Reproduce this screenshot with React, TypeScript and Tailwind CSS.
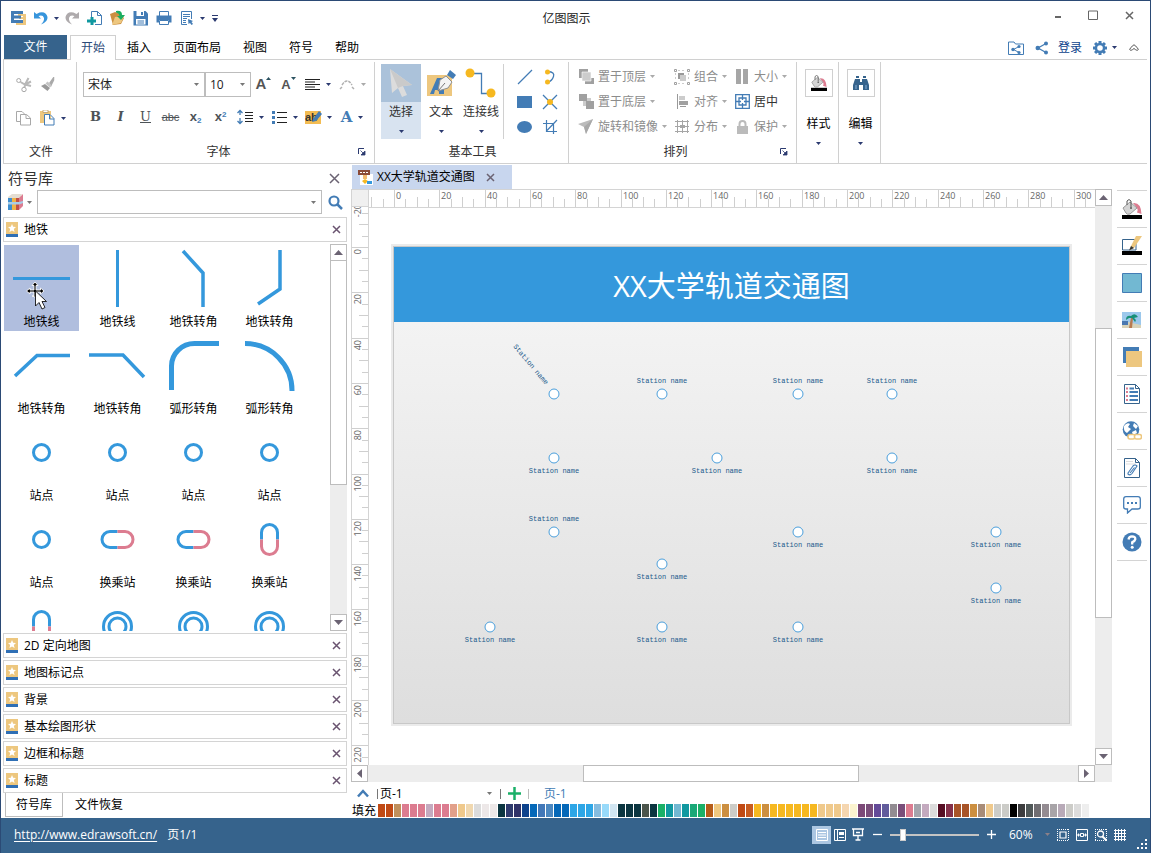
import type { ReactNode } from "react";

const BLUE = "#3498dc";
const STEEL = "#437cb5";
const PINK = "#dc7c90";
const SAND = "#edc77f";

/* ---------- small building blocks ---------- */

function Svg({ w, h, children }: { w: number; h: number; children: ReactNode }) {
  return (
    <svg width={w} height={h} viewBox={`0 0 ${w} ${h}`} fill="none" className="shrink-0" aria-hidden="true">
      {children}
    </svg>
  );
}

function Caret({ color = "#2b3a70" }: { color?: string }) {
  return (
    <Svg w={5} h={3}>
      <path d="M0 0H5L2.500 3Z" fill={color} />
    </Svg>
  );
}

function IconButton({ label, className = "", children }: { label: string; className?: string; children: ReactNode }) {
  return (
    <button type="button" aria-label={label} className={`flex shrink-0 items-center justify-center ${className}`}>
      {children}
    </button>
  );
}

function Cross({ size = 9, color = "#6b6373" }: { size?: number; color?: string }) {
  return (
    <Svg w={size} h={size}>
      <path d={`M1 1L${size - 1} ${size - 1}M${size - 1} 1L1 ${size - 1}`} stroke={color} strokeWidth="1.500" />
    </Svg>
  );
}

/* ---------- title bar ---------- */

function TitleBar() {
  return (
    <header className="grid h-[34px] grid-cols-[1fr_auto_1fr] items-center">
      <div className="flex items-center pl-2.5">
        <Svg w={16} h={16}>
          <path d="M7 4H15V15H5V12H12V9H8V7H12V6H7Z" fill={SAND} />
          <path d="M0 1H12V4H3V5.500H10V8.500H3V10H12V13H0Z" fill={STEEL} />
        </Svg>
        <IconButton label="撤销" className="ml-1.5 h-5 w-4">
          <Svg w={16} h={16}>
            <path d="M1 2V8.500H8L5.500 6Q10 4.500 11 8Q11.500 11 8 14.500Q15 12 14.500 7Q13 1 6.500 2.500L3.500 4Z" fill="#3795dc" />
          </Svg>
        </IconButton>
        <IconButton label="撤销列表" className="h-5 w-3.5"><Caret /></IconButton>
        <IconButton label="重做" className="ml-px h-5 w-4">
          <Svg w={16} h={16}>
            <path d="M15 2V8.500H8L10.500 6Q6 4.500 5 8Q4.500 11 8 14.500Q1 12 1.500 7Q3 1 9.500 2.500L12.500 4Z" fill="#aeaaac" />
          </Svg>
        </IconButton>
        <IconButton label="新建" className="ml-[7px] h-5 w-4">
          <Svg w={16} h={16}>
            <path d="M4.500 7V1.500H10.500L14.500 5.500V14.500H8M10.500 1.500V5.500H14.500" stroke={STEEL} />
            <path d="M3.500 7H6.500V9.500H9V12.500H6.500V15H3.500V12.500H0V9.500H3.500Z" fill="#1098a0" />
          </Svg>
        </IconButton>
        <IconButton label="打开" className="ml-[7px] h-5 w-4">
          <Svg w={16} h={16}>
            <path d="M0 4L5 2L8 3L14 8L11 14L3 15Z" fill="#cc8f40" />
            <path d="M2 15L5 7L14 6L11 13Z" fill={SAND} />
            <path d="M6 1Q12 0 12 5H15L11 10L7 6H9.500Q9 3 6 2.500Z" fill="#1aae60" />
          </Svg>
        </IconButton>
        <IconButton label="保存" className="ml-[7px] h-5 w-4">
          <Svg w={16} h={16}>
            <path d="M.5 1H12.500L15 3.500V15.500H.5Z" fill={STEEL} />
            <path d="M3.500 1H11V6H3.500ZM3 9H12.500V14.500H3Z" fill="#fff" />
            <path d="M8 2H10V5H8ZM4.500 10.500H11V11.500H4.500ZM4.500 12.500H11V13.500H4.500Z" fill={STEEL} />
          </Svg>
        </IconButton>
        <IconButton label="打印" className="ml-[7px] h-5 w-4">
          <Svg w={16} h={16}>
            <path d="M3.500 6V1.500H12.500V6M3.500 10.500H12.500V14.500H3.500Z" stroke={STEEL} />
            <path d="M.5 5.500H15.500V12.500H13V10H3V12.500H.5Z" fill={STEEL} />
          </Svg>
        </IconButton>
        <IconButton label="打印预览" className="ml-[7px] h-5 w-4">
          <Svg w={16} h={16}>
            <path d="M8 14.500H2.500V1.500H12.500V9" stroke={STEEL} />
            <path d="M4 4.500H11M4 6.500H11M4 8.500H8M4 10.500H7M4 12.500H7" stroke={STEEL} />
            <path d="M9 9L14 11L12.500 12L14 14L12.500 15L11 13L9.500 14Z" fill={STEEL} />
          </Svg>
        </IconButton>
        <IconButton label="预览列表" className="h-5 w-3.5"><Caret /></IconButton>
        <IconButton label="自定义快速访问工具栏" className="h-5 w-3">
          <Svg w={6} h={7}><path d="M0 0H6V1H0ZM0 3H6L3 7Z" fill="#2b3a70" /></Svg>
        </IconButton>
      </div>
      <h1 className="mr-[18px] pt-0.5 text-xs text-[#222]">亿图图示</h1>
      <div className="flex items-center justify-end pr-[3px] pb-1.5">
        <IconButton label="最小化" className="h-6 w-9"><Svg w={11} h={11}><path d="M3 6H9V8H3Z" fill="#666" /></Svg></IconButton>
        <IconButton label="最大化" className="h-6 w-9"><Svg w={10} h={10}><path d="M.5 1H9.500V9.500H.5Z" stroke="#666" /></Svg></IconButton>
        <IconButton label="关闭" className="h-6 w-9"><Cross color="#666" /></IconButton>
      </div>
    </header>
  );
}

/* ---------- ribbon ---------- */

const tabs = ["插入", "页面布局", "视图", "符号", "帮助"];

function TabRow() {
  return (
    <nav className="relative z-10 -mb-px flex h-[25px] pl-[3px] text-xs text-black" aria-label="功能区选项卡">
      <button type="button" className="mb-px w-[63px] bg-[#36638c] text-white">文件</button>
      <button type="button" className="ml-[3px] border border-b-0 border-[#d0d0d0] bg-white px-2.5 text-[#2c4a78]">开始</button>
      {tabs.map((t) => (
        <button type="button" key={t} className="px-[11px]">{t}</button>
      ))}
      <div className="ml-auto flex items-center pr-2">
        <IconButton label="共享文件夹" className="h-5 w-4">
          <Svg w={16} h={14}>
            <path d="M.5 13.500V1H6L7.500 3H15.500V13.500Z" stroke={STEEL} />
            <path d="M11 5.500L5.500 8.500L11 11.500" stroke={STEEL} />
            <circle cx="11" cy="5.500" r="1.600" fill={STEEL} /><circle cx="5" cy="8.500" r="1.700" fill={STEEL} /><circle cx="11" cy="11.500" r="1.600" fill={STEEL} />
          </Svg>
        </IconButton>
        <IconButton label="共享" className="ml-2.5 h-5 w-4">
          <Svg w={14} h={14}>
            <path d="M11 2.500L3 7L11 11.500" stroke={STEEL} strokeWidth="1.300" />
            <circle cx="11" cy="2.500" r="2" fill={STEEL} /><circle cx="2.800" cy="7" r="2.300" fill={STEEL} /><circle cx="11" cy="11.500" r="2" fill={STEEL} />
          </Svg>
        </IconButton>
        <button type="button" className="ml-2 text-[#0d428c]">登录</button>
        <IconButton label="设置" className="ml-2.5 h-5 w-4">
          <Svg w={14} h={14}>
            <g fill={STEEL}>
              <path d="M5.500 0H8.500V14H5.500Z" /><path d="M0 5.500H14V8.500H0Z" />
              <path d="M1 3.100L3.100 1L13 10.900L10.900 13Z" /><path d="M10.900 1L13 3.100L3.100 13L1 10.900Z" />
              <circle cx="7" cy="7" r="5.300" />
            </g>
            <circle cx="7" cy="7" r="2.800" fill="#fff" />
          </Svg>
        </IconButton>
        <IconButton label="设置列表" className="h-5 w-3"><Caret /></IconButton>
        <IconButton label="折叠功能区" className="ml-1.5 h-5 w-4">
          <Svg w={10} h={8}><path d="M.7 5.500Q.7 4 5 .7Q9.300 4 9.300 5.500Q8.500 7.500 5 4.500Q1.500 7.500.7 5.500Z" stroke="#555" /></Svg>
        </IconButton>
      </div>
    </nav>
  );
}

function Group({ label, launcher, className = "", children }: { label: string; launcher?: boolean; className?: string; children: ReactNode }) {
  return (
    <section aria-label={label} className="mt-0.5 flex shrink-0 flex-col border-r border-[#d0d0d0]">
      <div className={`h-20 pt-0.5 ${className}`}>{children}</div>
      <div className={`relative flex h-5 items-center justify-center text-xs text-[#333] ${launcher ? "pr-3.5" : "pl-0.5"}`}>
        {label}
        {launcher && (
          <button type="button" aria-label={`${label}对话框`} className="absolute right-2 top-1.5">
            <Svg w={8} h={8}>
              <path d="M.5 6V.5H6" stroke="#2b3a70" />
              <path d="M2.500 2.500L5 5M7 3V7H3Z" fill="#2b3a70" stroke="#2b3a70" strokeWidth=".8" />
            </Svg>
          </button>
        )}
      </div>
    </section>
  );
}

function SplitButton({ label, muted, children }: { label: string; muted?: boolean; children: ReactNode }) {
  return (
    <button type="button" aria-label={label} className="flex h-6 w-[34px] items-center gap-1.5 pl-1">
      {children}
      <Caret color={muted ? "#aaa" : "#2b3a70"} />
    </button>
  );
}

function Combo({ label, options, className }: { label: string; options: string[]; className: string }) {
  return (
    <div className={`relative flex ${className}`}>
      <select aria-label={label} className="h-[25px] w-full appearance-none border border-[#bdbdbd] bg-white pl-1 text-xs text-[#222]">
        {options.map((o) => <option key={o}>{o}</option>)}
      </select>
      <span className="pointer-events-none absolute right-1.5 top-[11px]"><Caret color="#777" /></span>
    </div>
  );
}

function FileGroup() {
  return (
    <Group label="文件" className="grid w-[72px] grid-cols-[25px_32px] content-start pl-[7px]">
      <IconButton label="剪切" className="h-[42px]">
        <Svg w={16} h={16}>
          <circle cx="2.700" cy="3.500" r="2" stroke="#a8a8a8" /><circle cx="8" cy="12.500" r="2.200" stroke="#a8a8a8" />
          <path d="M4.500 5L9 7.500L15 4.500M8.500 10.500L9 7.500L12.500 1M9 7.500L15 9" stroke="#b8b8b8" strokeWidth="2" />
        </Svg>
      </IconButton>
      <IconButton label="格式刷" className="h-[42px] w-6">
        <Svg w={16} h={16}>
          <path d="M10 6L13.500 1V3L11 8Z" fill="#999" stroke="#aaa" strokeWidth="1.500" />
          <path d="M7.500 4.500L12 8.500L10 10.500L5.500 6.500Z" fill="#c4c4c4" /><path d="M5 7L10 11L7.500 14L1 9Z" fill="#999" />
        </Svg>
      </IconButton>
      <IconButton label="复制" className="h-6">
        <Svg w={16} h={16}>
          <path d="M4 11.500H.5V1.500H6L9 4.500" stroke="#a8a8a8" />
          <path d="M4.500 4.500H10.500L14.500 8V15H4.500ZM10 4.500V8.500H14.500" fill="#fff" stroke="#a8a8a8" />
        </Svg>
      </IconButton>
      <SplitButton label="粘贴">
        <Svg w={15} h={16}>
          <path d="M0 1H11V13H0Z" fill={SAND} /><path d="M3 0H8V2.500H3Z" fill="#fff" stroke="#b8965a" strokeWidth=".7" />
          <path d="M4.500 4.500H10L14 8.500V15H4.500ZM9.500 4.500V9H14" fill="#fff" stroke={STEEL} />
        </Svg>
      </SplitButton>
    </Group>
  );
}

function FontGroup() {
  return (
    <Group label="字体" launcher className="flex w-[297px] flex-col gap-2 pl-1.5">
      <div className="mt-2 flex h-[25px] items-center">
        <Combo label="字体" options={["宋体", "黑体"]} className="w-[122px]" />
        <Combo label="字号" options={["10", "12"]} className="w-[46px]" />
        <button type="button" aria-label="增大字号" className="flex h-6 w-[25px] items-center justify-center font-[Liberation_Sans] text-[15px] font-bold text-[#555]">
          A<span className="mb-3"><Svg w={5} h={3}><path d="M0 3H5L2.500 0Z" fill="#2c5260" /></Svg></span>
        </button>
        <button type="button" aria-label="减小字号" className="flex h-6 w-[25px] items-center justify-center font-[Liberation_Sans] text-[13px] font-bold text-[#555]">
          A<span className="mb-3"><Caret color="#2c5260" /></span>
        </button>
        <SplitButton label="对齐方式">
          <Svg w={15} h={12}><path d="M0 .5H15M0 3H10M0 5.500H15M0 8H10M0 10.500H15" stroke="#222" strokeWidth="1.100" /></Svg>
        </SplitButton>
        <SplitButton label="弧形文字" muted>
          <Svg w={16} h={12}><path d="M1 10L3 8M3 6Q8-2 13 6M13 8L15 10" stroke="#b0b0b0" strokeWidth="1.500" strokeDasharray="3 1" /></Svg>
        </SplitButton>
      </div>
      <div className="flex h-6 items-center font-[DejaVu_Serif] text-[13px] font-bold text-[#4d5357]">
        <button type="button" className="w-[25px]" aria-label="粗体">B</button>
        <button type="button" className="w-[25px] italic" aria-label="斜体">I</button>
        <button type="button" className="w-[25px] font-normal underline" aria-label="下划线">U</button>
        <button type="button" className="w-[25px] font-[Liberation_Sans] text-[11px] font-normal line-through" aria-label="删除线">abc</button>
        <button type="button" className="w-[25px] font-[Liberation_Sans]" aria-label="下标">x<sub className="text-[8px] text-[#437cb5]">2</sub></button>
        <button type="button" className="w-[25px] font-[Liberation_Sans]" aria-label="上标">x<sup className="text-[8px] text-[#437cb5]">2</sup></button>
        <SplitButton label="行距">
          <Svg w={16} h={16}>
            <path d="M3 2V6M3 9V14M.5 4L3 1.500L5.500 4M.5 12L3 14.500L5.500 12" stroke={STEEL} strokeWidth="1.300" />
            <path d="M8 3.500H16M8 6.500H16M8 9.500H16M8 12.500H16" stroke="#222" />
          </Svg>
        </SplitButton>
        <SplitButton label="项目符号">
          <Svg w={16} h={14}>
            <path d="M1 1H4V4H1ZM1 6H4V9H1ZM1 11H4V14H1Z" fill={STEEL} /><path d="M6 2.500H16M6 7.500H16M6 12.500H16" stroke="#222" strokeWidth="1.200" />
          </Svg>
        </SplitButton>
        <SplitButton label="突出显示">
          <span className="relative flex h-[13px] w-4 items-center bg-[#f3bc52] font-[Liberation_Sans] text-[11px] leading-none text-[#333]">
            ab
            <span className="absolute left-1.5 top-0"><Svg w={11} h={11}><path d="M2 8L8 0L11 3L5 10L1 11Z" fill={STEEL} /></Svg></span>
          </span>
        </SplitButton>
        <button type="button" aria-label="字体颜色" className="flex h-6 w-[34px] items-center justify-center gap-1.5 text-[15px] text-[#437cb5]">
          A<Caret />
        </button>
      </div>
    </Group>
  );
}

function BigTool({ label, active, children }: { label: string; active?: boolean; children: ReactNode }) {
  return (
    <button type="button" aria-pressed={!!active} className={`flex h-[75px] w-10 flex-col items-center text-xs whitespace-nowrap text-[#333] ${active ? "bg-[#d8e3f0]" : ""}`}>
      <span className={`flex h-[38px] w-full items-center justify-center ${active ? "bg-[#abc2da]" : ""}`}>{children}</span>
      <span className="mt-0.5 leading-4">{label}</span>
      <span className="mt-2.5"><Caret /></span>
    </button>
  );
}

function ToolsGroup() {
  return (
    <Group label="基本工具" className="flex w-[193px] pl-1.5">
      <BigTool label="选择" active>
        <Svg w={24} h={30}><path d="M1 1L3 25L9 20L13 29L18 27L14 18L23 17Z" fill="#dcdcdc" /><path d="M1 1L9 20L14 18L23 17Z" fill="#cacaca" /></Svg>
      </BigTool>
      <BigTool label="文本">
        <Svg w={30} h={28}>
          <path d="M1 6H26V27H1Z" fill={SAND} />
          <path d="M4 25L11 9H18V25H13V21H9L8 25Z" fill={STEEL} />
          <path d="M12 22L14 11L20 7L26 13L22 19Z" fill="#f4f4f4" stroke="#909090" /><path d="M12 22L19 14" stroke="#777" />
          <path d="M21 6L24 1L30 6L27 10Z" fill={STEEL} />
        </Svg>
      </BigTool>
      <BigTool label="连接线">
        <Svg w={32} h={30}>
          <path d="M5 5.500H16.500V25.500H26" stroke={STEEL} strokeWidth="1.300" />
          <circle cx="5" cy="5" r="4.500" fill="#f6b820" /><circle cx="26" cy="25" r="4.500" fill="#f6b820" />
        </Svg>
      </BigTool>
      <div className="ml-0.5 h-[75px] border-l border-[#d0d0d0]" />
      <div className="ml-2 grid grid-cols-[25px_25px] auto-rows-[25px]">
        <IconButton label="直线"><Svg w={16} h={16}><path d="M1 15L15 1" stroke={STEEL} strokeWidth="1.300" /></Svg></IconButton>
        <IconButton label="弧线"><Svg w={12} h={16}><path d="M4 2.500Q11 3 9.500 7.500Q8 12 4 13" stroke={STEEL} strokeWidth="1.300" /><circle cx="3.500" cy="3" r="2.500" fill="#f6b820" /><circle cx="3.500" cy="13" r="2.500" fill="#f6b820" /></Svg></IconButton>
        <IconButton label="矩形"><Svg w={15} h={12}><path d="M0 0H15V12H0Z" fill={STEEL} /></Svg></IconButton>
        <IconButton label="连接点"><Svg w={16} h={16}><path d="M1 1L15 15M15 1L1 15" stroke={STEEL} strokeWidth="1.300" /><circle cx="8" cy="8" r="3" fill="#f6b820" /></Svg></IconButton>
        <IconButton label="椭圆"><Svg w={15} h={12}><ellipse cx="7.500" cy="6" rx="7.500" ry="6" fill={STEEL} /></Svg></IconButton>
        <IconButton label="裁剪"><Svg w={16} h={16}><path d="M4.500 1V12.500H15M1 4.500H11.500V15M15 1L5 11.500" stroke={STEEL} strokeWidth="1.200" /></Svg></IconButton>
      </div>
    </Group>
  );
}

function ArrangeButton({ label, enabled, children }: { label: string; enabled?: boolean; children: ReactNode }) {
  return (
    <button type="button" className={`flex h-[25px] items-center text-xs whitespace-nowrap ${enabled ? "text-[#333]" : "text-[#8c8c8c]"}`}>
      <span className="mr-0.5 flex w-5 justify-center">{children}</span>
      {label}
      {!enabled && <span className="ml-1"><Caret color="#aaa" /></span>}
    </button>
  );
}

function ArrangeGroup() {
  return (
    <Group label="排列" launcher className="grid w-[227px] grid-cols-[96px_60px_60px] auto-rows-[25px] pl-[7px]">
      <ArrangeButton label="置于顶层">
        <Svg w={15} h={15}><path d="M0 0H9V9H0ZM6 9H15V15H6Z" fill="#a0a0a0" /><path d="M3 3H12V12H3Z" fill="#ccc" stroke="#fff" strokeWidth=".6" /></Svg>
      </ArrangeButton>
      <ArrangeButton label="组合">
        <Svg w={16} h={16}>
          <path d="M4 4H10V10H4Z" fill="#999" /><path d="M6 6H12V12H6Z" fill="#ccc" />
          <path d="M.5.5H2.500V2.500H.5ZM13.500.5H15.500V2.500H13.500ZM.5 13.500H2.500V15.500H.5ZM13.500 13.500H15.500V15.500H13.500Z" stroke="#a0a0a0" />
          <path d="M4 1.500H12M4 14.500H12M1.500 4V12M14.500 4V12" stroke="#ccc" strokeDasharray="2 2" />
        </Svg>
      </ArrangeButton>
      <ArrangeButton label="大小"><Svg w={14} h={15}><path d="M1 0H6V15H1ZM8 0H13V15H8Z" fill="#a6a6a6" /></Svg></ArrangeButton>
      <ArrangeButton label="置于底层">
        <Svg w={15} h={15}><path d="M4 4H12V12H4Z" fill="#ccc" /><path d="M0 0H8V7H0ZM7 7H15V15H7Z" fill="#a0a0a0" /></Svg>
      </ArrangeButton>
      <ArrangeButton label="对齐">
        <Svg w={13} h={15}><path d="M1.500 0V15M4 12.500H10" stroke="#999" /><path d="M3 2H9V6H3Z" fill="#ccc" /><path d="M3 7H12V11H3Z" fill="#a0a0a0" /></Svg>
      </ArrangeButton>
      <ArrangeButton label="居中" enabled>
        <Svg w={15} h={15}><path d="M.7.7H14.300V14.300H.7ZM4 4H11V11H4ZM7.500 1V6M7.500 9V14M1 7.500H6M9 7.500H14" stroke={STEEL} strokeWidth="1.300" /></Svg>
      </ArrangeButton>
      <ArrangeButton label="旋转和镜像">
        <Svg w={16} h={15}><path d="M0 5L15 0L8 15L6 8Z" fill="#bbb" /><path d="M15 0L8 15L6 8Z" fill="#a8a8a8" /></Svg>
      </ArrangeButton>
      <ArrangeButton label="分布">
        <Svg w={14} h={15}><path d="M2.500 1V14M7.500 1V14M12.500 1V14M0 2.500H14M0 7.500H14M0 12.500H14" stroke="#a6a6a6" /><path d="M5 6H10V9H5Z" fill="#a6a6a6" /></Svg>
      </ArrangeButton>
      <ArrangeButton label="保护">
        <Svg w={13} h={14}><path d="M1 6H12V14H1Z" fill="#bbb" /><path d="M3.500 7V4Q3.500 1 6.500 1Q9.500 1 9.500 4V7" stroke="#bbb" strokeWidth="2" /></Svg>
      </ArrangeButton>
    </Group>
  );
}

function PaintBucket({ large }: { large?: boolean }) {
  const s = large ? 20 : 16;
  return (
    <svg width={s} height={s} viewBox="0 0 20 20" fill="none" aria-hidden="true">
      <path d="M0 16H20V20H0Z" fill="#000" />
      <path d="M11 4Q19 3 19.500 15L15 13.500Q16.500 11 15 9Z" fill={PINK} />
      <path d="M1 9L8 3L15 9L8 15Q5 16 4 14Z" fill="#d4d4d4" stroke="#999" />
      <path d="M5 6V2Q7-1 9 2V8" stroke="#555" /><circle cx="9" cy="9" r="1" fill="#555" />
    </svg>
  );
}

function SingleTool({ label, children }: { label: string; children: ReactNode }) {
  return (
    <button type="button" className="mt-0.5 flex w-[42px] shrink-0 flex-col items-center border-r border-[#d0d0d0] pt-[7px] pl-0.5 text-xs text-black">
      <span className="flex size-7 items-center justify-center border border-[#d0d0d0]">{children}</span>
      <span className="mt-[19px] leading-4">{label}</span>
      <span className="mt-2.5"><Caret /></span>
    </button>
  );
}

function Ribbon() {
  return (
    <div className="mr-[3px] ml-0.5 flex h-[105px] border border-r-0 border-[#d0d0d0]">
      <FileGroup />
      <FontGroup />
      <ToolsGroup />
      <ArrangeGroup />
      <SingleTool label="样式"><PaintBucket /></SingleTool>
      <SingleTool label="编辑">
        <Svg w={16} h={16}>
          <path d="M3 1H6V3H3ZM10 1H13V3H10ZM2 4H7V7H9V4H14L16 10V15H10V10H6V15H0V10Z" fill="#36638c" />
          <path d="M3 10V14M13 10V14" stroke="#86b0d8" />
        </Svg>
      </SingleTool>
    </div>
  );
}

/* ---------- symbol library ---------- */

const Pill = ({ vertical }: { vertical?: boolean }) =>
  vertical ? (
    <>
      <path d="M29.500 33.500V26.500A8 8 0 0 1 45.500 26.500V33.500" stroke={BLUE} strokeWidth="3" />
      <path d="M29.500 33.500V40.500A8 8 0 0 0 45.500 40.500V33.500" stroke={PINK} strokeWidth="3" />
    </>
  ) : (
    <>
      <path d="M37.500 25.500H30A8 8 0 0 0 30 41.500H37.500" stroke={BLUE} strokeWidth="3" />
      <path d="M37.500 25.500H45A8 8 0 0 1 45 41.500H37.500" stroke={PINK} strokeWidth="3" />
    </>
  );

const Stop = () => <circle cx="37.500" cy="33.500" r="8" stroke={BLUE} strokeWidth="3" />;
const Rings = () => (
  <g stroke={BLUE} strokeWidth="3">
    <circle cx="37.500" cy="33.500" r="14" /><circle cx="37.500" cy="33.500" r="8.500" />
  </g>
);
const Line = ({ d, w = 3.500 }: { d: string; w?: number }) => <path d={d} stroke={BLUE} strokeWidth={w} />;

const symbols: { name?: string; art: ReactNode }[] = [
  { name: "地铁线", art: <Line d="M9 33.500H66" w={3} /> },
  { name: "地铁线", art: <Line d="M37.500 5V62" w={3} /> },
  { name: "地铁转角", art: <Line d="M27 6L47 28V62" /> },
  { name: "地铁转角", art: <Line d="M48 5V44L26 59" /> },
  { name: "地铁转角", art: <Line d="M11 44L33 23.500H66" /> },
  { name: "地铁转角", art: <Line d="M9 23H43L64 45" /> },
  { name: "弧形转角", art: <Line d="M15.500 58V34A23 22.500 0 0 1 38.500 11.500H63" w={5} /> },
  { name: "弧形转角", art: <Line d="M13 11.500A47 47 0 0 1 60 59" w={5} /> },
  { name: "站点", art: <Stop /> },
  { name: "站点", art: <Stop /> },
  { name: "站点", art: <Stop /> },
  { name: "站点", art: <Stop /> },
  { name: "站点", art: <Stop /> },
  { name: "换乘站", art: <Pill /> },
  { name: "换乘站", art: <Pill /> },
  { name: "换乘站", art: <Pill vertical /> },
  { art: <Pill vertical /> },
  { art: <Rings /> },
  { art: <Rings /> },
  { art: <Rings /> },
];

const closedLibraries = ["2D 定向地图", "地图标记点", "背景", "基本绘图形状", "边框和标题", "标题"];

function LibraryHeader({ name }: { name: string }) {
  return (
    <div className="flex h-[25px] shrink-0 items-center border border-[#d4d4d4] pr-[5px] pl-0.5 text-xs text-black">
      <Svg w={12} h={15}>
        <path d="M0 0H12V12H0Z" fill={SAND} /><path d="M0 12H12V15H0Z" fill="#2f6fb5" />
        <path d="M6 2L7.200 4.800L10 5L7.800 7L8.600 10L6 8.400L3.400 10L4.200 7L2 5L4.800 4.800Z" fill="#fff" />
      </Svg>
      <span className="ml-1.5 flex-1">{name}</span>
      <IconButton label={`关闭${name}`} className="size-2.5"><Cross size={9} color="#6a5470" /></IconButton>
    </div>
  );
}

function ScrollArrow({ dir }: { dir: "up" | "down" | "left" | "right" }) {
  const shapes = { up: "M0 7H9L4.500 2Z", down: "M0 2H9L4.500 7Z", left: "M7 0V9L2 4.500Z", right: "M2 0V9L7 4.500Z" };
  const names = { up: "向上滚动", down: "向下滚动", left: "向左滚动", right: "向右滚动" };
  return (
    <IconButton label={names[dir]} className="size-[17px] border border-[#bdbdbd] bg-white">
      <Svg w={9} h={9}><path d={shapes[dir]} fill="#6b6373" /></Svg>
    </IconButton>
  );
}

function SymbolPanel() {
  return (
    <aside className="flex w-[350px] shrink-0 flex-col pr-1 pl-0.5">
      <div className="flex h-[26px] shrink-0 items-center justify-between pt-0.5 pr-[7px] pl-[5px]">
        <h2 className="text-[15px] text-[#333]">符号库</h2>
        <IconButton label="关闭符号库" className="size-3"><Cross size={11} /></IconButton>
      </div>
      <div className="flex h-6 shrink-0 items-center pr-0.5 pl-[5px]">
        <IconButton label="符号库列表" className="h-6 w-6 gap-1">
          <Svg w={15} h={16}>
            <path d="M0 3L4 0H14L12 4H0Z" fill="#e4ddd2" /><path d="M0 4H4V16H0Z" fill="#3f8fd0" /><path d="M4 4H8V16H4Z" fill="#f0b44a" />
            <path d="M8 4H11V16H8Z" fill="#c05048" /><path d="M11 4L15 0V12L11 16Z" fill={PINK} /><path d="M0 8H11L15 7V9L11 10.500H0Z" fill="#a8cde8" />
          </Svg>
          <Caret color="#777" />
        </IconButton>
        <div className="ml-[5px] flex h-6 flex-1 items-center border border-[#bdbdbd]">
          <input type="text" aria-label="搜索符号" className="h-full min-w-0 flex-1 px-1 text-xs outline-none" />
          <IconButton label="搜索记录" className="h-full w-4"><Caret color="#777" /></IconButton>
        </div>
        <IconButton label="搜索" className="ml-[3px] size-5">
          <Svg w={15} h={15}><circle cx="6" cy="6" r="4.500" stroke={STEEL} strokeWidth="2.200" /><path d="M9.500 9.500L14 14" stroke={STEEL} strokeWidth="2.500" /></Svg>
        </IconButton>
      </div>
      <div className="mt-[3px] mb-0.5 flex flex-col"><LibraryHeader name="地铁" /></div>
      <div className="flex min-h-0 flex-1">
        <div className="grid flex-1 grid-cols-[76px_76px_76px_76px] auto-rows-[87px] content-start overflow-hidden pt-px pl-px">
          {symbols.map((s, i) => (
            <button type="button" key={i} className={`mr-px mb-px flex flex-col items-center text-xs text-black ${i === 0 ? "bg-[#b0bede]" : ""}`}>
              <Svg w={75} h={68}>
                {s.art}
                {i === 0 && (
                  <g stroke="#fff" strokeWidth=".9" fill="#000">
                    <path d="M31 37L34 40.500H32V45H36.500V43L40 46L36.500 49V47H32V51L34 52H31L28 51L30 51V47H26V49L22.500 46L26 43V45H30V40.500H28Z" />
                    <path d="M31.500 46V61L35 57.500L38 64L41 62.500L38 56.500H42.500Z" fill="#fff" stroke="#111" />
                  </g>
                )}
              </Svg>
              {s.name && <span className="leading-[18px]">{s.name}</span>}
            </button>
          ))}
        </div>
        <div className="flex w-[17px] flex-col bg-[#ededed]">
          <ScrollArrow dir="up" />
          <div className="-mt-px h-[225px] border border-[#bdbdbd] bg-white" />
          <div className="flex-1" />
          <ScrollArrow dir="down" />
        </div>
      </div>
      <div className="mt-0.5 flex flex-col gap-0.5">
        {closedLibraries.map((n) => <LibraryHeader key={n} name={n} />)}
      </div>
      <div className="flex h-[25px] shrink-0 pb-px pl-0.5 text-xs text-black">
        <button type="button" className="border border-t-0 border-[#bdbdbd] px-2.5">符号库</button>
        <button type="button" className="px-3">文件恢复</button>
      </div>
    </aside>
  );
}

/* ---------- drawing area ---------- */

const UNIT = 2.265;

function HorizontalRuler() {
  const ticks = Array.from({ length: 64 }, (_, i) => (i - 2) * 5);
  return (
    <svg width="100%" height="18" className="block min-w-0 flex-1 border-b border-[#d4d4d4]" aria-hidden="true">
      {ticks.map((v) => {
        const x = Math.round(25 + v * UNIT) + 0.5;
        const top = v % 20 === 0 ? 0 : v % 10 === 0 ? 7 : 9;
        return (
          <g key={v}>
            <path d={`M${x} ${top}V18`} stroke="#cfcfcf" />
            {v % 20 === 0 && <text x={x + 1.500} y="9" fontSize="9" fill="#666">{v}</text>}
          </g>
        );
      })}
    </svg>
  );
}

function VerticalRuler() {
  const ticks = Array.from({ length: 52 }, (_, i) => (i - 4) * 5);
  return (
    <svg width="18" height="100%" className="block h-full shrink-0 border-x border-[#d4d4d4]" aria-hidden="true">
      {ticks.map((v) => {
        const y = Math.round(40 + v * UNIT) + 0.5;
        const left = v % 20 === 0 ? 0 : v % 10 === 0 ? 7 : 10;
        return (
          <g key={v}>
            <path d={`M${left} ${y}H18`} stroke="#cfcfcf" />
            {v % 20 === 0 && <text transform={`translate(9 ${y + 1.500}) rotate(-90)`} textAnchor="end" fontSize="9" fill="#666">{v}</text>}
          </g>
        );
      })}
    </svg>
  );
}

type Station = { x: number; y: number; label: "above" | "below" | "slanted" };

const stations: Station[] = [
  { x: 160, y: 147, label: "slanted" },
  { x: 268, y: 147, label: "above" },
  { x: 404, y: 147, label: "above" },
  { x: 498, y: 147, label: "above" },
  { x: 160, y: 211, label: "below" },
  { x: 323, y: 211, label: "below" },
  { x: 498, y: 211, label: "below" },
  { x: 160, y: 285, label: "above" },
  { x: 404, y: 285, label: "below" },
  { x: 602, y: 285, label: "below" },
  { x: 268, y: 317, label: "below" },
  { x: 602, y: 341, label: "below" },
  { x: 96, y: 380, label: "below" },
  { x: 268, y: 380, label: "below" },
  { x: 404, y: 380, label: "below" },
];

const labelPlace = {
  above: "-top-3.5 left-1/2 -translate-x-1/2",
  below: "top-3 left-1/2 -translate-x-1/2",
  slanted: "-left-11 -top-[30px] rotate-[50deg]",
};

function DrawingPage() {
  return (
    <div className="relative h-[476px] w-[675px] shrink-0 bg-linear-to-b from-[#f7f7f7] to-[#dedede] shadow-[0_0_0_1px_#c8c8c8,0_0_0_3px_#ebebeb]">
      <h2 className="flex h-[75px] items-center justify-center bg-[#3498dc] pt-0.5 text-[29px] text-white">XX大学轨道交通图</h2>
      {stations.map((s, i) => (
        <div key={i} className="absolute size-[11px] -translate-1/2 rounded-full border border-[#4a9fdc] bg-white" style={{ left: s.x, top: s.y }}>
          <span className={`absolute font-[Liberation_Mono] text-[7px] leading-[10px] whitespace-nowrap text-[#1d5b8c] ${labelPlace[s.label]}`}>Station name</span>
        </div>
      ))}
    </div>
  );
}

const palette =
  "c04a15 c04a15 c0905c dc7c90 dc7c90 dc7c90 c4aabf dc7c90 dc7c90 e2a08a efc98c f0d8b0 dcdcdc ede8e8 ede8e8 0b3540 2f3b6e 2f3268 0d428c 0568b8 4278b8 4c88c0 0568b8 0568b8 2ea6e6 2ea6e6 2ea6e6 84bce0 98dafa d2e6f2 0b3540 0b3540 0b3540 4c554c 0b3540 1ab068 1098a0 72b8d2 1098a0 1aa878 1ab068 b55c18 efc880 cc8f40 ccccc8 c04a15 c85c20 f6b820 cc8f40 f6b820 f6b820 f6b820 f6b820 f6b820 f6b820 efc98c efc98c efc98c f5d6b0 fbf4cf 7c4a78 7a4e7a 644a98 625c9c 928c92 7a4e7a dc7c90 a4a4ac c4aabf dcdcdc 560e24 84304a a85428 a85428 cc8f40 a88c78 efc98c ccccc8 ccccc8 000000 3c3c3e 505858 706e72 948c92 a8a4a8 b8aab8 ccccc8 dcdcdc eeeeee".split(" ");

function Workspace() {
  return (
    <main className="flex min-w-0 flex-1 flex-col">
      <div className="flex h-[25px] shrink-0 pt-px">
        <div className="ml-px flex w-40 items-center bg-[#c8d6ee] pl-1.5 text-xs whitespace-nowrap text-black">
          <Svg w={15} h={15}>
            <path d="M2 4H15V15H2Z" fill="#fff" /><path d="M0 0H12V5H0Z" fill="#8a4a38" /><path d="M2 2.500H10" stroke="#fff" strokeDasharray="2 1" />
            <path d="M5 5H9V9H5Z" fill="#f0b870" /><path d="M4 11L7 9L10 11L7 14Z" fill="#f6b820" /><path d="M9 11H14V14H9Z" fill={BLUE} />
          </Svg>
          <span className="ml-1">XX大学轨道交通图</span>
          <IconButton label="关闭文档" className="ml-2.5 size-3"><Cross /></IconButton>
        </div>
      </div>
      <div className="flex min-h-0 flex-1">
        <div className="flex min-w-0 flex-1 flex-col">
          <div className="flex h-[18px] shrink-0 border-t border-[#d4d4d4]">
            <div className="w-[18px] shrink-0 border border-t-0 border-[#d4d4d4] bg-[#f0f0f0]" />
            <HorizontalRuler />
          </div>
          <div className="flex min-h-0 flex-1">
            <VerticalRuler />
            <div className="min-w-0 flex-1 overflow-hidden pt-10 pl-[25px]"><DrawingPage /></div>
          </div>
        </div>
        <div className="flex w-[17px] flex-col bg-[#ededed]">
          <ScrollArrow dir="up" />
          <div className="basis-[122px]" />
          <div className="min-h-0 basis-[290px] border border-[#bdbdbd] bg-white" />
          <div className="flex-1" />
          <ScrollArrow dir="down" />
        </div>
      </div>
      <div className="flex h-[17px] shrink-0 bg-[#ededed] pr-[17px]">
        <ScrollArrow dir="left" />
        <div className="basis-[215px]" />
        <div className="basis-[276px] border border-[#bdbdbd] bg-white" />
        <div className="flex-1" />
        <ScrollArrow dir="right" />
      </div>
      <div className="flex h-[21px] shrink-0 items-center pt-0.5 text-xs text-black">
        <IconButton label="展开页面列表" className="ml-1.5 h-[18px] w-3">
          <Svg w={12} h={9}><path d="M1 7.500L6 2L11 7.500" stroke={STEEL} strokeWidth="2.500" /></Svg>
        </IconButton>
        <div className="ml-2 h-2.5 border-l border-[#777]" />
        <div className="relative flex w-[122px] items-center">
          <select aria-label="页面" className="w-full appearance-none bg-white pl-0.5 leading-[18px] outline-none"><option>页-1</option></select>
          <span className="pointer-events-none absolute right-2"><Caret color="#777" /></span>
        </div>
        <div className="h-2.5 border-l border-[#777]" />
        <IconButton label="添加页面" className="ml-1.5 size-3.5">
          <Svg w={13} h={13}><path d="M6.500 0V13M0 6.500H13" stroke="#1ab068" strokeWidth="2.500" /></Svg>
        </IconButton>
        <div className="ml-[7px] h-2.5 border-l border-[#bbb]" />
        <button type="button" className="ml-[15px] text-[#437cb5]">页-1</button>
      </div>
      <div className="flex h-[15px] shrink-0 items-center overflow-hidden pl-px text-xs text-black">
        <span className="mr-0.5 shrink-0 leading-[15px]">填充</span>
        {palette.map((c, i) => (
          <button type="button" key={i} aria-label={`#${c}`} className="mr-px h-[13px] w-[7px] shrink-0" style={{ backgroundColor: `#${c}` }} />
        ))}
      </div>
    </main>
  );
}

/* ---------- right tool strip ---------- */

const sideTools: { name: string; icon: ReactNode }[] = [
  { name: "填充", icon: <PaintBucket large /> },
  {
    name: "线条",
    icon: (
      <Svg w={20} h={20}>
        <path d="M0 15H20V19H0Z" fill="#000" /><path d="M.5 3.500H14V14H.5Z" fill="#fff" stroke="#36638c" />
        <path d="M14 0H20L12 12L8 14L9 10Z" fill={SAND} /><path d="M9 10L12 12L7 14.500Z" fill="#333" />
      </Svg>
    ),
  },
  { name: "主题颜色", icon: <Svg w={20} h={20}><path d="M.5.5H19.500V19.500H.5Z" fill="#72b8d2" stroke={STEEL} /></Svg> },
  {
    name: "图片",
    icon: (
      <Svg w={20} h={17}>
        <path d="M0 0H19V16H0Z" fill="#9cc8ec" /><path d="M0 12L6 10L19 13V16H0Z" fill="#d8d2b8" /><path d="M0 9H6V13H0Z" fill="#4a78b0" />
        <path d="M9 6L11 6L10 16H7Z" fill="#b87a50" /><path d="M4 8Q4 3 9 4Q13 0 16 5L12 6Q15 8 13 10L10 6L7 6Z" fill="#189078" />
      </Svg>
    ),
  },
  { name: "图层", icon: <Svg w={20} h={20}><path d="M1 0H17V16H1Z" fill={STEEL} /><path d="M4 4H20V20H4Z" fill={SAND} /></Svg> },
  {
    name: "属性",
    icon: (
      <Svg w={16} h={20}>
        <path d="M.5.5H11.500L15.500 4.500V19.500H.5ZM11.500.5V4.500H15.500" fill="#fff" stroke="#36638c" />
        <path d="M5.500 4.500H10M5.500 8H14M5.500 12H14M5.500 16H14" stroke={STEEL} strokeWidth="1.800" /><path d="M2 4.500H4M2 8H4M2 12H4M2 16H4" stroke={PINK} strokeWidth="1.800" />
      </Svg>
    ),
  },
  {
    name: "超链接",
    icon: (
      <Svg w={20} h={20}>
        <circle cx="9" cy="8.500" r="8.300" fill={STEEL} /><path d="M2 5Q5 1 8 3L6 6L9 8L5 12Q1 10 2 5ZM12 2L16 5L14 8L11 5ZM10 11L14 9L15 12L11 14Z" fill="#fff" />
        <rect x="6" y="13.500" width="7" height="4.500" rx="2" fill="#fff" stroke={SAND} strokeWidth="1.600" /><rect x="12.500" y="13.500" width="7" height="4.500" rx="2" fill="#fff" stroke={SAND} strokeWidth="1.600" />
      </Svg>
    ),
  },
  {
    name: "附件",
    icon: (
      <Svg w={16} h={20}>
        <path d="M.5.5H11.500L15.500 4.500V19.500H.5ZM11.500.5V4.500H15.500" fill="#fff" stroke="#36638c" /><path d="M2 3.500H9M2 6H12" stroke="#ddd" />
        <path d="M4 15L9 8Q11 6 13 8L8 15.500Q6 18 4 16ZM6 15L10.500 9.500" stroke={STEEL} strokeWidth="1.100" />
      </Svg>
    ),
  },
  {
    name: "批注",
    icon: (
      <Svg w={18} h={18}>
        <path d="M3 .7H15Q17.300.7 17.300 3V11Q17.300 13 15 13H9L4.500 17V13H3Q.7 13 .7 11V3Q.7.7 3 .7Z" stroke={STEEL} strokeWidth="1.300" />
        <path d="M4 6H6V8H4ZM8 6H10V8H8ZM12 6H14V8H12Z" fill={STEEL} />
      </Svg>
    ),
  },
  {
    name: "帮助",
    icon: (
      <Svg w={20} h={20}>
        <circle cx="10" cy="10" r="9.500" fill={STEEL} /><path d="M6.500 7.500Q7 4.300 10 4.300Q13.500 4.500 13.300 7.300Q13 9 10.200 10.300V12.500" stroke="#fff" strokeWidth="2.300" /><circle cx="10.200" cy="15.300" r="1.500" fill="#fff" />
      </Svg>
    ),
  },
];

function SideStrip() {
  return (
    <aside className="flex w-[38px] shrink-0 flex-col items-center pt-[26px] pl-0.5">
      {sideTools.map((t) => (
        <IconButton key={t.name} label={t.name} className="h-[37px] w-[30px] border-t border-[#d4d4d4]">{t.icon}</IconButton>
      ))}
      <div className="w-[30px] border-t border-[#d4d4d4]" />
    </aside>
  );
}

/* ---------- status bar ---------- */

function StatusBar() {
  return (
    <footer className="relative flex h-[35px] shrink-0 items-center bg-[#36638c] pb-0.5 text-xs text-white">
      <a href="http://www.edrawsoft.cn/" className="ml-[13px] underline underline-offset-2">http://www.edrawsoft.cn/</a>
      <span className="ml-2.5">页1/1</span>
      <div className="mr-6 ml-auto flex items-center">
        <IconButton label="普通视图" className="h-[18px] w-[19px] bg-[#abc6e2]">
          <Svg w={12} h={12}><path d="M.5.5H11.500V11.500H.5ZM2 3.500H10M2 6H10M2 8.500H10" stroke="#fff" /></Svg>
        </IconButton>
        <IconButton label="大纲视图" className="ml-[3px] h-[18px] w-3">
          <Svg w={12} h={12}><path d="M.5.5H11.500V11.500H.5ZM3.500.5V11.500M5 8.500H10" stroke="#fff" /><path d="M5 3H10V6H5Z" fill="#fff" /></Svg>
        </IconButton>
        <IconButton label="演示" className="ml-1.5 h-[18px] w-3">
          <Svg w={12} h={13}><path d="M0 1H12M1.500 1V7.500H10.500V1M6 8V12M3.500 12H8.500M4 4.500H8" stroke="#fff" strokeWidth="1.300" /></Svg>
        </IconButton>
        <IconButton label="缩小" className="ml-1.5 size-3.5"><Svg w={9} h={9}><path d="M0 4.500H9" stroke="#fff" strokeWidth="1.300" /></Svg></IconButton>
        <input
          type="range"
          aria-label="缩放比例"
          min={0}
          max={100}
          defaultValue={12}
          className="mx-1.5 h-[13px] w-[89px] appearance-none bg-transparent [&::-webkit-slider-runnable-track]:h-0.5 [&::-webkit-slider-runnable-track]:bg-[#c4c4c4] [&::-webkit-slider-thumb]:-mt-[5px] [&::-webkit-slider-thumb]:h-3 [&::-webkit-slider-thumb]:w-1.5 [&::-webkit-slider-thumb]:appearance-none [&::-webkit-slider-thumb]:border [&::-webkit-slider-thumb]:border-[#ccc] [&::-webkit-slider-thumb]:bg-white"
        />
        <IconButton label="放大" className="size-3"><Svg w={9} h={9}><path d="M0 4.500H9M4.500 0V9" stroke="#fff" strokeWidth="1.300" /></Svg></IconButton>
        <button type="button" className="ml-3 flex w-[41px] items-center justify-between">60%<Caret color="#8c8088" /></button>
        <div className="ml-[7px] flex gap-[7px]">
          <IconButton label="适合窗口" className="size-3">
            <Svg w={12} h={12}><path d="M0 .5H12M0 11.500H12M.5 0V12M11.500 0V12" stroke="#fff" strokeDasharray="1 1" /><path d="M3 3H9V9H3Z" stroke="#fff" strokeWidth="1.200" /></Svg>
          </IconButton>
          <IconButton label="适合页宽" className="size-3">
            <Svg w={12} h={12}><path d="M.5.5H11.500V11.500H.5ZM4.500 4.500H7.500V7.500H4.500ZM1 6H4M8 6H11M2.500 4.500V7.500M9.500 4.500V7.500" stroke="#fff" /></Svg>
          </IconButton>
          <IconButton label="区域缩放" className="size-3">
            <Svg w={12} h={12}><path d="M0 .5H12M0 11.500H12M.5 0V12M11.500 0V12" stroke="#fff" strokeDasharray="1 1" /><circle cx="5.500" cy="5" r="3" stroke="#fff" strokeWidth="1.300" /><path d="M7.500 7.500L12 12" stroke="#fff" strokeWidth="2" /></Svg>
          </IconButton>
          <IconButton label="网格" className="size-3">
            <Svg w={12} h={12}><path d="M1.500 0V12M4.500 0V12M7.500 0V12M10.500 0V12M0 1.500H12M0 4.500H12M0 7.500H12M0 10.500H12" stroke="#fff" /></Svg>
          </IconButton>
        </div>
      </div>
      <div className="absolute right-[3px] bottom-1">
        <Svg w={10} h={10}><path d="M8 0H10V2H8ZM4 4H6V6H4ZM8 4H10V6H8ZM0 8H2V10H0ZM4 8H6V10H4ZM8 8H10V10H8Z" fill="#fff" /></Svg>
      </div>
    </footer>
  );
}

export default function App() {
  return (
    <div className="flex h-screen flex-col overflow-hidden border border-b-0 border-[#2b4a75] bg-white font-['Open_Sans','Noto_Sans_CJK_SC',sans-serif]">
      <TitleBar />
      <TabRow />
      <Ribbon />
      <div className="flex min-h-0 flex-1">
        <SymbolPanel />
        <Workspace />
        <SideStrip />
      </div>
      <StatusBar />
    </div>
  );
}
